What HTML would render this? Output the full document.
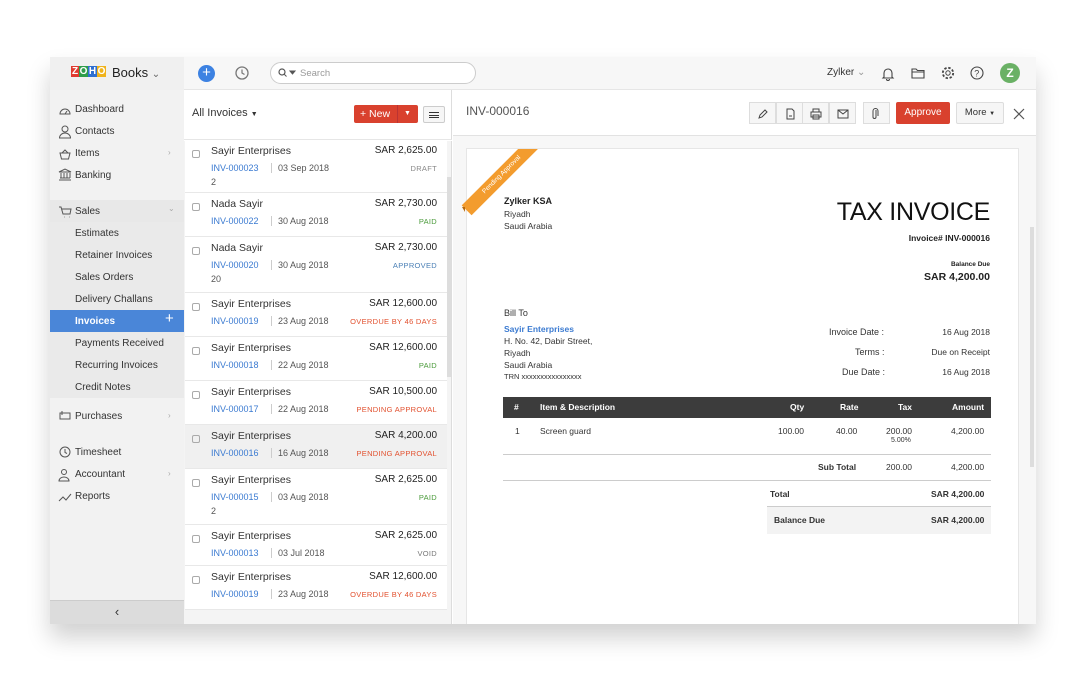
<!DOCTYPE html>
<html><head><meta charset="utf-8"><style>
*{box-sizing:border-box;margin:0;padding:0}
body{width:1085px;height:679px;background:#fff;font-family:"Liberation Sans",sans-serif;position:relative;overflow:hidden;color:#333}
.a{position:absolute;white-space:nowrap}
#frame{position:absolute;left:50px;top:57px;width:986px;height:567px;background:#fff;box-shadow:0 14px 22px rgba(0,0,0,.18);overflow:hidden}
.side{position:absolute;left:0;top:33px;width:134px;height:534px;background:#f2f2f2}
.si{position:absolute;left:25px;font-size:10px;color:#333}
.sub{position:absolute;left:0;width:134px;height:22px;background:#eaeaea}
.row{position:absolute;left:135px;width:262px;border-bottom:1px solid #e8e8e8;background:#fff}
.row .cb{position:absolute;left:7px;top:10px;width:8px;height:8px;border:1px solid #aaa;border-radius:2px}
.row .n{position:absolute;left:26px;top:5px;font-size:10.5px;color:#333}
.row .amt{position:absolute;right:10px;top:5px;font-size:10px;color:#222}
.row .inv{position:absolute;left:26px;top:23px;font-size:9px;color:#3a7ad1}
.row .d{position:absolute;left:86px;top:23px;font-size:9px;color:#555;border-left:1px solid #ccc;padding-left:6px}
.row .st{position:absolute;right:10px;top:24px;font-size:7.5px;letter-spacing:.3px}
.row .x{position:absolute;left:26px;top:37px;font-size:9px;color:#555}
.ib{position:absolute;top:103px;height:22px;width:27px;border:1px solid #ddd;background:#f6f6f6}
.t{font-size:8.5px;color:#333}
</style></head><body>
<div id="frame">
 <div class="a" style="left:0;top:0;width:986px;height:33px;background:#f7f7f7;border-bottom:1px solid #e6e6e6"></div>
 <div class="a" style="left:0;top:0;width:134px;height:33px;background:#f0f0f0"></div>
 <div class="a" style="left:21px;top:9px;font-size:10px;font-weight:bold;letter-spacing:-.5px">
  <span style="background:#e03a2f;color:#fff;padding:0 1px">Z</span><span style="background:#2e9d4a;color:#fff;padding:0 1px">O</span><span style="background:#2f6fd1;color:#fff;padding:0 1px">H</span><span style="background:#f0b31c;color:#fff;padding:0 1px">O</span></div>
 <div class="a" style="left:62px;top:8px;font-size:13px;color:#222">Books <span style="font-size:10px;color:#666">&#8964;</span></div>
 <div class="a" style="left:148px;top:8px;width:17px;height:17px;border-radius:50%;background:#3d82e2;color:#fff;font-size:15px;line-height:16px;text-align:center">+</div>
 <svg class="a" style="left:184px;top:8px" width="16" height="16" viewBox="0 0 16 16"><circle cx="8" cy="8" r="6" fill="none" stroke="#777" stroke-width="1.3"/><path d="M8 4.5V8l2.5 1.5" fill="none" stroke="#777" stroke-width="1.2"/></svg>
 <div class="a" style="left:220px;top:5px;width:206px;height:22px;border:1px solid #ccc;border-radius:11px;background:#fff"></div>
 <svg class="a" style="left:228px;top:11px" width="20" height="10"><circle cx="4" cy="4" r="3" fill="none" stroke="#555" stroke-width="1.2"/><path d="M6 6l2.5 2.5M12 3l2.5 3 2.5-3z" stroke="#555" fill="#555"/></svg>
 <div class="a" style="left:250px;top:11px;font-size:9.5px;color:#999">Search</div>
 <div class="a" style="left:777px;top:10px;font-size:10px;color:#333">Zylker <span style="color:#999">&#8964;</span></div>
 <svg class="a" style="left:831px;top:9px" width="14" height="15" viewBox="0 0 14 15"><path d="M3 11V7a4 4 0 018 0v4l1 1H2z M5.5 13a1.5 1.5 0 003 0" fill="none" stroke="#444" stroke-width="1.1"/></svg>
 <svg class="a" style="left:861px;top:10px" width="15" height="13"><path d="M1 2h4l1.5 1.5H13V11H1z M1 5h12" fill="none" stroke="#444" stroke-width="1.1"/></svg>
 <svg class="a" style="left:891px;top:9px" width="14" height="14"><circle cx="7" cy="7" r="2.2" fill="none" stroke="#444"/><circle cx="7" cy="7" r="5.2" fill="none" stroke="#444" stroke-dasharray="2.4 1.7" stroke-width="1.8"/></svg>
 <svg class="a" style="left:920px;top:9px" width="14" height="14"><circle cx="7" cy="7" r="6" fill="none" stroke="#444" stroke-width="1.1"/><text x="4.3" y="10.5" font-size="9" fill="#444" font-family="Liberation Sans">?</text></svg>
 <div class="a" style="left:950px;top:6px;width:20px;height:20px;border-radius:50%;background:#6ab165;color:#fff;font-weight:bold;font-size:12px;line-height:20px;text-align:center">Z</div>

 <div class="side">
  <div class="si" style="top:14px">Dashboard</div>
  <div class="si" style="top:36px">Contacts</div>
  <div class="si" style="top:58px">Items</div><div class="a" style="left:118px;top:58px;font-size:8px;color:#aaa">›</div>
  <div class="si" style="top:80px">Banking</div>
  <div class="sub" style="top:110px;background:#e8e8e8"></div>
  <div class="si" style="top:116px">Sales</div><div class="a" style="left:118px;top:114px;font-size:8px;color:#aaa">&#8964;</div>
  <div class="sub" style="top:132px;height:176px"></div>
  <div class="si" style="top:138px">Estimates</div>
  <div class="si" style="top:160px">Retainer Invoices</div>
  <div class="si" style="top:182px">Sales Orders</div>
  <div class="si" style="top:204px">Delivery Challans</div>
  <div class="sub" style="top:220px;background:#4a86d8"></div>
  <div class="si" style="top:226px;color:#fff;font-weight:bold">Invoices</div><div class="a" style="left:115px;top:220px;font-size:15px;color:#fff">+</div>
  <div class="si" style="top:248px">Payments Received</div>
  <div class="si" style="top:270px">Recurring Invoices</div>
  <div class="si" style="top:292px">Credit Notes</div>
  <div class="si" style="top:321px">Purchases</div><div class="a" style="left:118px;top:321px;font-size:8px;color:#aaa">›</div>
  <div class="si" style="top:357px">Timesheet</div>
  <div class="si" style="top:379px">Accountant</div><div class="a" style="left:118px;top:379px;font-size:8px;color:#aaa">›</div>
  <div class="si" style="top:401px">Reports</div>
  <div class="a" style="left:0;top:510px;width:134px;height:24px;background:#dcdcdc;border-top:1px solid #ccc;text-align:center;font-size:13px;line-height:22px;color:#333">‹</div>
 </div>
 <svg class="a" style="left:8px;top:45px" width="14" height="100" fill="none" stroke="#555" stroke-width="1">
  <path d="M2 12a5 5 0 0110 0z M7 12l2-3"/>
  <circle cx="7" cy="27" r="3"/><path d="M1.5 36a5.5 5 0 0111 0z"/>
  <path d="M2 51h10l-1.5 6h-7z M4 51l3-3 3 3"/>
  <path d="M1 78h12M2 76h10M3 71v5M6 71v5M9 71v5M12 71v5M1 70l6-3 6 3z"/>
 </svg>
 <svg class="a" style="left:8px;top:149px" width="14" height="300" fill="none" stroke="#555" stroke-width="1">
  <path d="M1 1h2l2 7h7l1-5H4M6 11h.5M11 11h.5"/>
  <path d="M2 207h10v6H2z M4 205v4"/>
  <circle cx="7" cy="246" r="5"/><path d="M7 243v3.5l2 1"/>
  <circle cx="6" cy="266" r="2.5"/><path d="M1 275a5 4 0 0110 0z"/>
  <path d="M1 295l4-4 3 3 5-6"/>
 </svg>

 <div class="a" style="left:134px;top:33px;width:268px;height:50px;background:#fff;border-bottom:1px solid #e6e6e6;border-right:1px solid #ddd"></div>
 <div class="a" style="left:142px;top:50px;font-size:11px;color:#333">All Invoices <span style="font-size:7px">▼</span></div>
 <div class="a" style="left:304px;top:48px;width:64px;height:18px;background:#d9412e;border-radius:2px;color:#fff;font-size:10.5px;line-height:18px;padding-left:6px">+ New<span style="position:absolute;left:43px;top:0;height:18px;border-left:1px solid #b33;padding-left:6px;font-size:7px">▼</span></div>
 <div class="a" style="left:373px;top:49px;width:22px;height:17px;border:1px solid #ccc;background:#f6f6f6;border-radius:2px"><div style="margin:5px 5px;height:6px;border-top:1px solid #333;border-bottom:1px solid #333"><div style="margin-top:2px;border-top:1px solid #333"></div></div></div>
 <div class="a" style="left:134px;top:84px;width:268px;height:483px;background:#f4f4f4;border-right:1px solid #ddd"></div>
 <div class="a" style="left:396px;top:120px;width:5px;height:200px;background:#ddd"></div>

 <div class="row" style="top:83px;height:53px"><div class="cb"></div><div class="n">Sayir Enterprises</div><div class="amt">SAR 2,625.00</div><div class="inv">INV-000023</div><div class="d">03 Sep 2018</div><div class="st" style="color:#888">DRAFT</div><div class="x">2</div></div>
 <div class="row" style="top:136px;height:44px"><div class="cb"></div><div class="n">Nada Sayir</div><div class="amt">SAR 2,730.00</div><div class="inv">INV-000022</div><div class="d">30 Aug 2018</div><div class="st" style="color:#4a9a3a">PAID</div></div>
 <div class="row" style="top:180px;height:56px"><div class="cb"></div><div class="n">Nada Sayir</div><div class="amt">SAR 2,730.00</div><div class="inv">INV-000020</div><div class="d">30 Aug 2018</div><div class="st" style="color:#4a7fb5">APPROVED</div><div class="x">20</div></div>
 <div class="row" style="top:236px;height:44px"><div class="cb"></div><div class="n">Sayir Enterprises</div><div class="amt">SAR 12,600.00</div><div class="inv">INV-000019</div><div class="d">23 Aug 2018</div><div class="st" style="color:#e2512f">OVERDUE BY 46 DAYS</div></div>
 <div class="row" style="top:280px;height:44px"><div class="cb"></div><div class="n">Sayir Enterprises</div><div class="amt">SAR 12,600.00</div><div class="inv">INV-000018</div><div class="d">22 Aug 2018</div><div class="st" style="color:#4a9a3a">PAID</div></div>
 <div class="row" style="top:324px;height:44px"><div class="cb"></div><div class="n">Sayir Enterprises</div><div class="amt">SAR 10,500.00</div><div class="inv">INV-000017</div><div class="d">22 Aug 2018</div><div class="st" style="color:#e2512f">PENDING APPROVAL</div></div>
 <div class="row" style="top:368px;height:44px;background:#f0f0f0"><div class="cb"></div><div class="n">Sayir Enterprises</div><div class="amt">SAR 4,200.00</div><div class="inv">INV-000016</div><div class="d">16 Aug 2018</div><div class="st" style="color:#e2512f">PENDING APPROVAL</div></div>
 <div class="row" style="top:412px;height:56px"><div class="cb"></div><div class="n">Sayir Enterprises</div><div class="amt">SAR 2,625.00</div><div class="inv">INV-000015</div><div class="d">03 Aug 2018</div><div class="st" style="color:#4a9a3a">PAID</div><div class="x">2</div></div>
 <div class="row" style="top:468px;height:41px"><div class="cb"></div><div class="n">Sayir Enterprises</div><div class="amt">SAR 2,625.00</div><div class="inv">INV-000013</div><div class="d">03 Jul 2018</div><div class="st" style="color:#777">VOID</div></div>
 <div class="row" style="top:509px;height:44px"><div class="cb"></div><div class="n">Sayir Enterprises</div><div class="amt">SAR 12,600.00</div><div class="inv">INV-000019</div><div class="d">23 Aug 2018</div><div class="st" style="color:#e2512f">OVERDUE BY 46 DAYS</div></div>

 <div class="a" style="left:403px;top:33px;width:583px;height:534px;background:#f7f7f7"></div>
 <div class="a" style="left:403px;top:33px;width:583px;height:46px;background:#fff;border-bottom:1px solid #e2e2e2"></div>
 <div class="a" style="left:416px;top:47px;font-size:12px;color:#555">INV-000016</div>
 <div class="ib" style="left:699px;top:45px"></div><div class="ib" style="left:726px;top:45px"></div><div class="ib" style="left:752px;top:45px"></div><div class="ib" style="left:779px;top:45px"></div>
 <div class="ib" style="left:813px;top:45px"></div>
 <svg class="a" style="left:705px;top:50px" width="120" height="14" fill="none" stroke="#444" stroke-width="1">
  <path d="M4 11l1-3 5-5 2 2-5 5z"/>
  <path d="M32 2h5l2 2v8h-7z M34 9h3"/>
  <path d="M58 5V2h6v3 M56 5h10v5H56z M58 8h6v4h-6z"/>
  <path d="M83 3h10v8H83z M83 3l5 4 5-4"/>
 </svg>
 <svg class="a" style="left:818px;top:50px" width="14" height="14" fill="none" stroke="#444"><path d="M8 3v7a1.5 1.5 0 01-3 0V4a2.5 2.5 0 015 0v5"/></svg>
 <div class="a" style="left:846px;top:45px;width:54px;height:22px;background:#d9412e;border-radius:2px;color:#fff;font-size:10px;line-height:22px;text-align:center">Approve</div>
 <div class="a" style="left:906px;top:45px;width:48px;height:22px;border:1px solid #ddd;background:#f6f6f6;border-radius:2px;font-size:9.5px;line-height:20px;text-align:center">More <span style="font-size:6px">▼</span></div>
 <svg class="a" style="left:963px;top:51px" width="12" height="12" stroke="#555" stroke-width="1.2"><path d="M1 1l10 10M11 1L1 11"/></svg>

 <div class="a" style="left:416px;top:91px;width:553px;height:480px;background:#fff;border:1px solid #e6e6e6"></div>
 <div class="a" style="left:980px;top:170px;width:4px;height:240px;background:#ddd"></div>
 <div class="a" style="left:410px;top:92px;width:80px;height:70px;overflow:hidden">
  <div class="a" style="left:-8px;top:19px;width:100px;height:14px;background:#f39c2e;transform:rotate(-45deg);color:#fff;font-size:6.5px;line-height:14px;text-align:center">Pending Approval</div>
 </div>
 <svg class="a" style="left:412px;top:150px" width="6" height="6"><path d="M0 0l3 0 0 5z" fill="#b56a10"/></svg>

 <div class="a" style="left:454px;top:139px;font-size:9px;font-weight:bold;color:#222">Zylker KSA</div>
 <div class="a t" style="left:454px;top:152px">Riyadh</div>
 <div class="a t" style="left:454px;top:164px">Saudi Arabia</div>
 <div class="a" style="right:46px;top:141px;font-size:25px;color:#111;letter-spacing:-.3px">TAX INVOICE</div>
 <div class="a" style="right:46px;top:176px;font-size:8.5px;font-weight:bold;color:#222">Invoice# INV-000016</div>
 <div class="a" style="right:46px;top:204px;font-size:6.5px;font-weight:bold;color:#222">Balance Due</div>
 <div class="a" style="right:46px;top:214px;font-size:10.5px;font-weight:bold;color:#222">SAR 4,200.00</div>
 <div class="a t" style="left:454px;top:251px;font-size:9px">Bill To</div>
 <div class="a" style="left:454px;top:267px;font-size:8.5px;font-weight:bold;color:#3a7ad1">Sayir Enterprises</div>
 <div class="a t" style="left:454px;top:279px">H. No. 42, Dabir Street,</div>
 <div class="a t" style="left:454px;top:291px">Riyadh</div>
 <div class="a t" style="left:454px;top:303px">Saudi Arabia</div>
 <div class="a t" style="left:454px;top:315px;font-size:7.5px">TRN xxxxxxxxxxxxxxxx</div>
 <div class="a t" style="left:779px;top:270px;font-size:9px">Invoice Date :</div><div class="a t" style="right:46px;top:270px">16 Aug 2018</div>
 <div class="a t" style="left:805px;top:290px;font-size:9px">Terms :</div><div class="a t" style="right:46px;top:290px">Due on Receipt</div>
 <div class="a t" style="left:792px;top:310px;font-size:9px">Due Date :</div><div class="a t" style="right:46px;top:310px">16 Aug 2018</div>

 <div class="a" style="left:453px;top:340px;width:488px;height:21px;background:#3c3c3c"></div>
 <div class="a" style="left:464px;top:345px;font-size:8.5px;font-weight:bold;color:#fff">#</div>
 <div class="a" style="left:490px;top:345px;font-size:8.5px;font-weight:bold;color:#fff">Item &amp; Description</div>
 <div class="a" style="left:740px;top:345px;font-size:8.5px;font-weight:bold;color:#fff">Qty</div>
 <div class="a" style="left:790px;top:345px;font-size:8.5px;font-weight:bold;color:#fff">Rate</div>
 <div class="a" style="left:848px;top:345px;font-size:8.5px;font-weight:bold;color:#fff">Tax</div>
 <div class="a" style="left:902px;top:345px;font-size:8.5px;font-weight:bold;color:#fff">Amount</div>
 <div class="a t" style="left:465px;top:369px">1</div>
 <div class="a t" style="left:490px;top:369px">Screen guard</div>
 <div class="a t" style="left:728px;top:369px">100.00</div>
 <div class="a t" style="left:786px;top:369px">40.00</div>
 <div class="a t" style="left:836px;top:369px">200.00</div>
 <div class="a t" style="left:841px;top:380px;font-size:7px">5.00%</div>
 <div class="a t" style="left:901px;top:369px">4,200.00</div>
 <div class="a" style="left:453px;top:397px;width:488px;border-top:1px solid #ccc"></div>
 <div class="a t" style="left:768px;top:405px;font-weight:bold">Sub Total</div>
 <div class="a t" style="left:836px;top:405px">200.00</div>
 <div class="a t" style="left:901px;top:405px">4,200.00</div>
 <div class="a" style="left:453px;top:423px;width:488px;border-top:1px solid #ccc"></div>
 <div class="a t" style="left:720px;top:432px;font-weight:bold">Total</div>
 <div class="a t" style="left:881px;top:432px;font-weight:bold">SAR 4,200.00</div>
 <div class="a" style="left:717px;top:449px;width:224px;height:28px;background:#f3f3f3;border-top:1px solid #ccc"></div>
 <div class="a t" style="left:724px;top:458px;font-weight:bold">Balance Due</div>
 <div class="a t" style="left:881px;top:458px;font-weight:bold">SAR 4,200.00</div>
</div>
</body></html>
